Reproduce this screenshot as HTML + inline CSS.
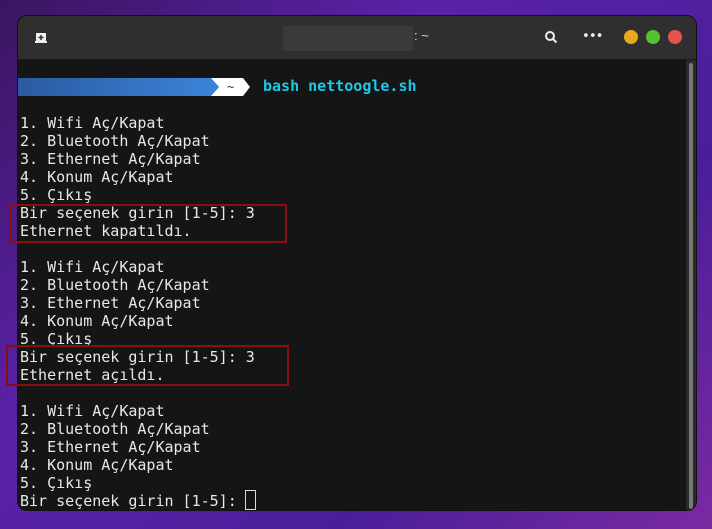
<!DOCTYPE html><html><head><meta charset="utf-8"><style>
body{margin:0;width:712px;height:529px;overflow:hidden;background:linear-gradient(135deg,#3a1560 0%,#5a22a8 35%,#4a1e9a 70%,#7a2aa0 100%);position:relative;font-family:"DejaVu Sans Mono","Liberation Mono",monospace}
.win{position:absolute;left:17px;top:15px;width:680px;height:496px;border-radius:10px;overflow:hidden;background:#151515;border:1px solid #111;box-sizing:border-box}
.tb{height:43px;background:#2f2f2f;border-bottom:1px solid #1c1c1c;position:relative}
.dot{position:absolute;top:14px;width:14px;height:14px;border-radius:50%}
.term{position:absolute;left:2px;top:98px;color:#e8e8e8;font-size:15px;line-height:18px;white-space:pre}
.box{position:absolute;border:2px solid #8b0d0d;box-sizing:border-box}
.sb{position:absolute;right:0;top:44px;width:10px;height:452px;background:#2a2a2a}
.sb div{position:absolute;left:3px;top:3px;width:4px;height:446px;background:#777;border-radius:2px}
</style></head><body>
<div class="win">
<div class="tb">
<svg style="position:absolute;left:17px;top:16px" width="12" height="12"><rect x="1" y="1" width="10" height="9" fill="#eee"/><rect x="0" y="9" width="12" height="2" fill="#eee"/><path d="M6 3v5M3.5 5.5h5" stroke="#2f2f2f" stroke-width="1.5"/></svg>
<div style="position:absolute;left:265px;top:10px;width:130px;height:25px;background:#3a3a3a"></div>
<div style="position:absolute;left:396px;top:12px;color:#ddd;font-size:13px;font-family:'Liberation Sans',sans-serif">: ~</div>
<svg style="position:absolute;left:526px;top:14px" width="14" height="14"><circle cx="6" cy="6" r="4" stroke="#eee" stroke-width="2" fill="none"/><path d="M9 9l3.5 3.5" stroke="#eee" stroke-width="2"/></svg>
<div style="position:absolute;left:564px;top:13px;color:#eee;font-size:13px;letter-spacing:-1px">•••</div>
<div class="dot" style="left:606px;background:#e6a81c"></div>
<div class="dot" style="left:628px;background:#54c22e"></div>
<div class="dot" style="left:650px;background:#e5544b"></div>
</div>
<div style="position:absolute;left:0;top:62px;width:192px;height:18px;background:linear-gradient(90deg,#2a5aa0,#3b82d8)"></div>
<svg style="position:absolute;left:190px;top:62px" width="50" height="18"><path d="M0 0h3l8 9-8 9H0z" fill="#3b82d8"/><path d="M3 0h32l7 9-7 9H3l8-9z" fill="#fff"/><text x="19" y="13" font-size="12" fill="#333" font-family="DejaVu Sans Mono">~</text></svg>
<div style="position:absolute;left:245px;top:61px;color:#1ec8e6;font-size:15px;line-height:18px;font-weight:bold">bash nettoogle.sh</div>
<div class="term">1. Wifi Aç/Kapat
2. Bluetooth Aç/Kapat
3. Ethernet Aç/Kapat
4. Konum Aç/Kapat
5. Çıkış
Bir seçenek girin [1-5]: 3
Ethernet kapatıldı.

1. Wifi Aç/Kapat
2. Bluetooth Aç/Kapat
3. Ethernet Aç/Kapat
4. Konum Aç/Kapat
5. Çıkış
Bir seçenek girin [1-5]: 3
Ethernet açıldı.

1. Wifi Aç/Kapat
2. Bluetooth Aç/Kapat
3. Ethernet Aç/Kapat
4. Konum Aç/Kapat
5. Çıkış
Bir seçenek girin [1-5]: </div>
<div style="position:absolute;left:227px;top:474px;width:9px;height:18px;border:1px solid #ddd"></div>
<div class="sb"><div></div></div>
</div>
<div class="box" style="left:9px;top:204px;width:278px;height:39px"></div>
<div class="box" style="left:6px;top:345px;width:283px;height:41px"></div>
</body></html>
